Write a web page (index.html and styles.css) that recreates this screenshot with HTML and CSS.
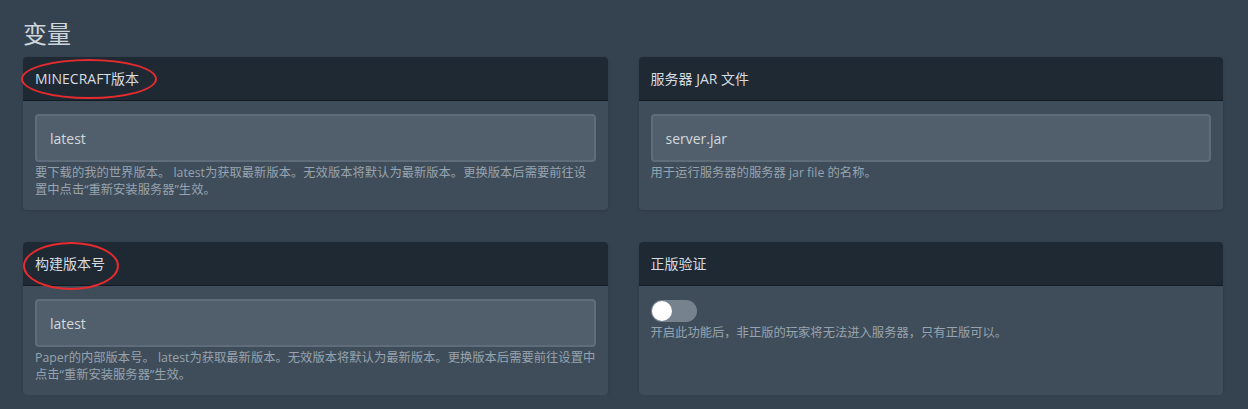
FILE: index.html
```html
<!DOCTYPE html>
<html lang="zh-CN">

<head>
    <meta charset="UTF-8">
    <meta name="viewport" content="width=device-width, initial-scale=1.0">
    <title>变量</title>
    <link rel="stylesheet" href="styles.css">
</head>

<body>
    <div class="page">
        <h2 class="page-title">变量</h2>

        <div class="var-grid">
            <!-- Minecraft version -->
            <div class="card">
                <div class="card-head">MINECRAFT版本</div>
                <div class="card-body">
                    <input class="field" type="text" value="latest">
                    <p class="help">要下载的我的世界版本。 latest为获取最新版本。无效版本将默认为最新版本。更换版本后需要前往设置中点击“重新安装服务器”生效。</p>
                </div>
                <span class="mark mark-version"></span>
            </div>

            <!-- Jar file -->
            <div class="card">
                <div class="card-head">服务器 JAR 文件</div>
                <div class="card-body">
                    <input class="field" type="text" value="server.jar">
                    <p class="help">用于运行服务器的服务器 jar file 的名称。</p>
                </div>
            </div>

            <!-- Build number -->
            <div class="card">
                <div class="card-head">构建版本号</div>
                <div class="card-body">
                    <input class="field" type="text" value="latest">
                    <p class="help">Paper的内部版本号。 latest为获取最新版本。无效版本将默认为最新版本。更换版本后需要前往设置中点击“重新安装服务器”生效。</p>
                </div>
                <span class="mark mark-build"></span>
            </div>

            <!-- Online mode -->
            <div class="card">
                <div class="card-head">正版验证</div>
                <div class="card-body">
                    <label class="toggle">
                        <input type="checkbox">
                        <span class="slider"></span>
                    </label>
                    <p class="help">开启此功能后，非正版的玩家将无法进入服务器，只有正版可以。</p>
                </div>
            </div>
        </div>
    </div>
</body>

</html>
```

FILE: styles.css
```css
body {
    margin: 0;
    background: #354350;
    font-family: 'Open Sans', 'Noto Sans CJK SC', sans-serif;
    color: #d5dadf;
}

.page {
    padding: 19px 25px 0 23px;
}

.page-title {
    margin: 0 0 9px;
    font-size: 24px;
    font-weight: normal;
    line-height: 29px;
    color: #cfd5da;
}

.var-grid {
    display: grid;
    grid-template-columns: 1fr 1fr;
    column-gap: 31px;
    row-gap: 32px;
}

.card {
    position: relative;
    background: #3f4d5a;
    border-radius: 4px;
    box-shadow: 0 1px 3px rgba(0, 0, 0, 0.15);
}

.card-head {
    height: 43px;
    line-height: 43px;
    padding: 0 12px;
    background: #1f2933;
    border-bottom: 1px solid #131a21;
    border-radius: 4px 4px 0 0;
    font-size: 14px;
    color: #d7dce0;
}

.card-body {
    padding: 13px 12px 12px;
}

.field {
    display: block;
    box-sizing: border-box;
    width: 100%;
    height: 48px;
    margin: 0;
    padding: 0 13px;
    background: #515f6c;
    border: 2px solid #5f6c79;
    border-radius: 4px;
    font-family: inherit;
    font-size: 14px;
    color: #d3d8dc;
    outline: none;
}

.help {
    margin: 3px 0 0;
    font-size: 12.3px;
    line-height: 16.5px;
    color: #97a3ae;
}

.toggle {
    position: relative;
    display: block;
    width: 46px;
    height: 22px;
    margin-top: 1px;
}

.toggle input {
    display: none;
}

.slider {
    position: absolute;
    inset: 0;
    background: #76828e;
    border-radius: 11px;
}

.slider::before {
    content: "";
    position: absolute;
    left: 1px;
    top: 1px;
    width: 20px;
    height: 20px;
    background: #fff;
    border-radius: 50%;
}

.mark {
    position: absolute;
    border: 2.5px solid #e62b2e;
    border-radius: 50%;
    pointer-events: none;
}

.mark-version {
    left: -2px;
    top: 2px;
    width: 132px;
    height: 36px;
}

.mark-build {
    left: 0;
    top: 0;
    width: 92px;
    height: 44px;
}
```
